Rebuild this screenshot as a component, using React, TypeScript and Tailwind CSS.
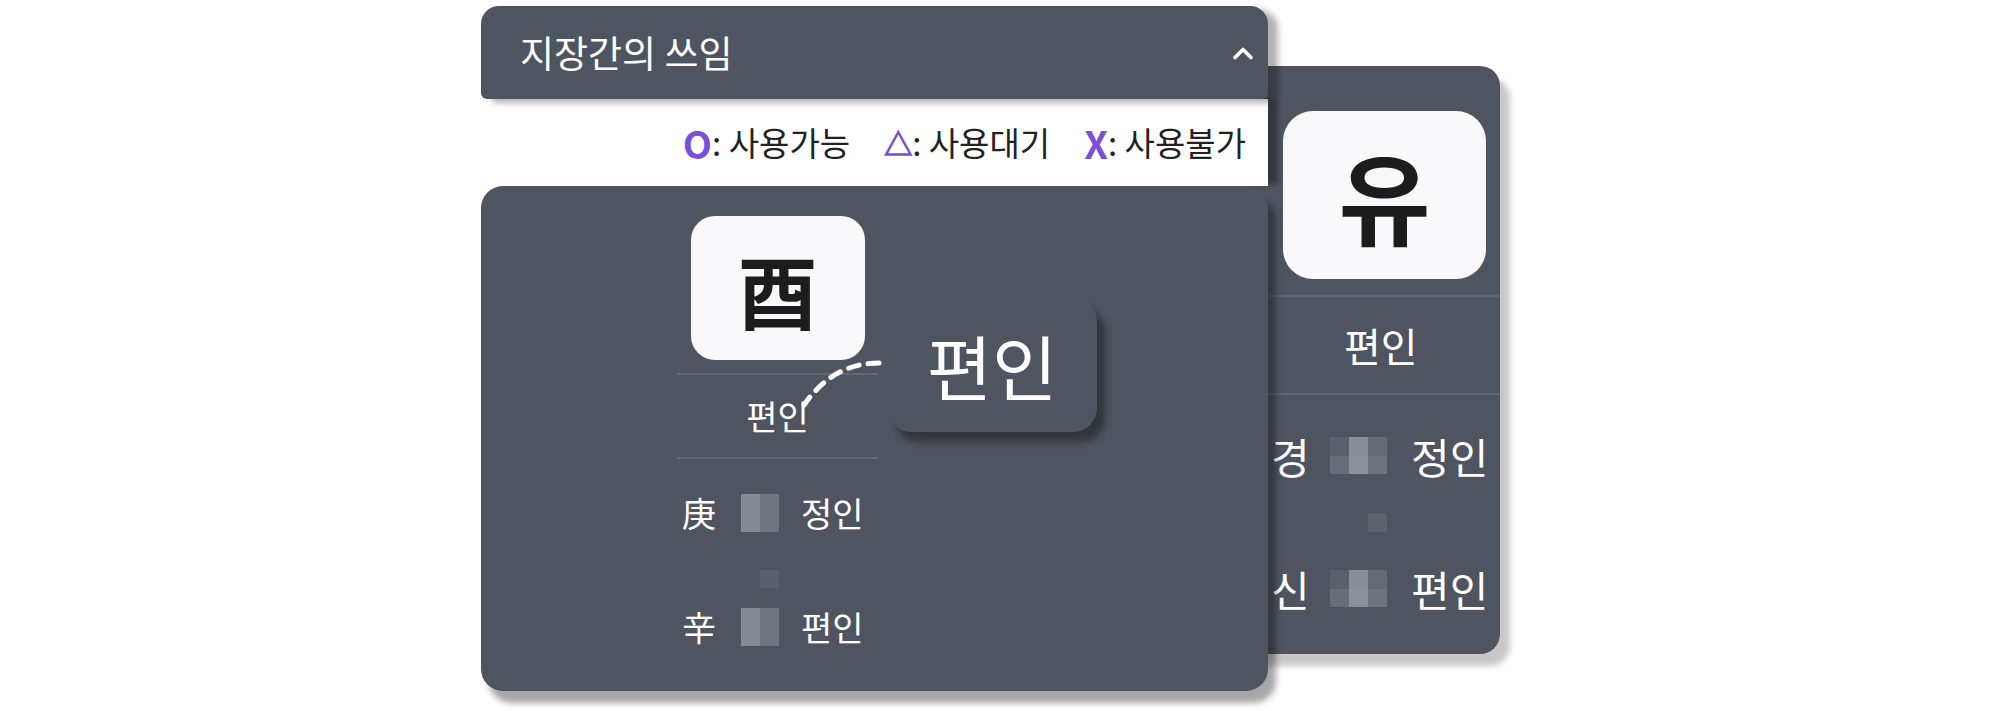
import React from "react";

const font = "font-[family-name:'Noto_Sans_CJK_KR','Noto_Sans',sans-serif]";

function MosaicTwo() {
  return (
    <div className="flex w-[38px] h-[38px]">
      <div className="w-[19px] h-full bg-[#868a93]" />
      <div className="w-[19px] h-full bg-[#6f747e]" />
    </div>
  );
}

function MosaicThree() {
  return (
    <div className="grid grid-cols-3 w-[57px] h-[37px]">
      <div className="bg-[#5b616b]" />
      <div className="bg-[#8a8e96]" />
      <div className="bg-[#646972]" />
      <div className="bg-[#686d77]" />
      <div className="bg-[#8d9199]" />
      <div className="bg-[#6e737c]" />
    </div>
  );
}

function Chevron() {
  return (
    <svg width="22" height="14" viewBox="0 0 22 14" fill="none">
      <polyline points="3,11.5 11,3.5 19,11.5" stroke="white" strokeWidth="3.6" strokeLinecap="round" strokeLinejoin="round" />
    </svg>
  );
}

export default function App() {
  return (
    <div className={`w-[2000px] h-[711px] bg-white overflow-hidden ${font}`}>
      <div className="flex items-start pl-[481px] pt-[6px]">
        {/* 왼쪽: 지장간의 쓰임 */}
        <div className="relative z-10 w-[787px] shrink-0 flex flex-col">
          <div className="relative z-10 h-[93px] flex items-center justify-between pl-[39px] pr-[14px] bg-[#4f5560] rounded-t-[18px] rounded-b-[6px] shadow-[10px_4px_6px_rgba(0,0,0,0.3)]">
            <span className="text-[37px] leading-none text-white">지장간의 쓰임</span>
            <Chevron />
          </div>

          <div className="h-[87px] bg-white flex items-center justify-end pr-[22px] text-[33px] leading-none text-[#222] shadow-[12px_0_5px_-2px_rgba(0,0,0,0.35)]">
            <span className="flex items-center"><span className="text-[38px] font-bold text-[#7b4fd9]">O</span>: 사용가능</span>
            <span className="ml-[34px] flex items-center"><span className="text-[28px] text-[#7b4fd9] [-webkit-text-stroke:1.3px_#7b4fd9]">△</span>: 사용대기</span>
            <span className="ml-[34px] flex items-center"><span className="text-[38px] font-bold text-[#7b4fd9]">X</span>: 사용불가</span>
          </div>

          <div className="relative h-[505px] rounded-[22px] bg-[#4f5560] shadow-[8px_12px_6px_rgba(0,0,0,0.35)] pl-[196px] pt-[30px]">
            <div className="w-[201px] flex flex-col">
              <div className="self-center w-[174px] h-[144px] rounded-[24px] bg-[#f9f9fb] flex items-center justify-center">
                <span className="text-[80px] font-bold leading-none text-[#1c1c1c]">酉</span>
              </div>
              <div className="mt-[13px] h-[2px] bg-[#626873]" />
              <div className="h-[82px] flex items-center justify-center text-[34px] leading-none text-white">편인</div>
              <div className="h-[2px] bg-[#626873]" />

              <div className="mt-[35px] h-[38px] flex items-center pl-[5px] text-[34px] leading-none text-white">
                <span className="w-[34px]">庚</span>
                <div className="ml-[25px]"><MosaicTwo /></div>
                <span className="ml-[22px]">정인</span>
              </div>
              <div className="mt-[38px] ml-[83px] w-[19px] h-[18px] bg-[#5a5f69]" />
              <div className="mt-[20px] h-[38px] flex items-center pl-[5px] text-[34px] leading-none text-white">
                <span className="w-[34px]">辛</span>
                <div className="ml-[25px]"><MosaicTwo /></div>
                <span className="ml-[22px]">편인</span>
              </div>
            </div>

            {/* 점선 연결 */}
            <svg className="absolute inset-0 pointer-events-none" width="787" height="505" viewBox="0 0 787 505" fill="none">
              <path d="M398 177 Q352 177 323 219" stroke="white" strokeWidth="5" strokeLinecap="round" strokeDasharray="11 9" />
            </svg>

            {/* 확대 라벨 */}
            <div className="absolute left-[406px] top-[111px] w-[210px] h-[135px] rounded-[24px] bg-[#4f5560] shadow-[8px_10px_7px_rgba(0,0,0,0.38)] flex items-center justify-center">
              <span className="text-[71px] leading-none text-white">편인</span>
            </div>
          </div>
        </div>

        {/* 오른쪽 카드 */}
        <div className="relative z-0 shrink-0 ml-[-68px] mt-[60px] w-[300px] h-[588px] rounded-[20px] bg-[#4f5560] shadow-[10px_12px_6px_rgba(0,0,0,0.22)] pt-[45px] flex flex-col">
          <div className="ml-[83px] w-[203px] h-[168px] rounded-[30px] bg-[#f9f9fb] flex items-center justify-center">
            <span className="text-[100px] font-bold leading-none text-[#1c1c1c]">유</span>
          </div>
          <div className="mt-[16px] h-[2px] bg-[#5e646e]" />
          <div className="h-[96px] flex items-center pl-[144px] text-[40px] leading-none text-white">편인</div>
          <div className="h-[2px] bg-[#5e646e]" />

          <div className="mt-[42px] h-[37px] flex items-center pl-[71px] text-[42px] leading-none text-white">
            <span className="w-[42px]">경</span>
            <div className="ml-[17px]"><MosaicThree /></div>
            <span className="ml-[24px]">정인</span>
          </div>
          <div className="mt-[39px] ml-[168px] w-[19px] h-[19px] bg-[#5d636d]" />
          <div className="mt-[38px] h-[37px] flex items-center pl-[71px] text-[42px] leading-none text-white">
            <span className="w-[42px]">신</span>
            <div className="ml-[17px]"><MosaicThree /></div>
            <span className="ml-[24px]">편인</span>
          </div>
        </div>
      </div>
    </div>
  );
}
